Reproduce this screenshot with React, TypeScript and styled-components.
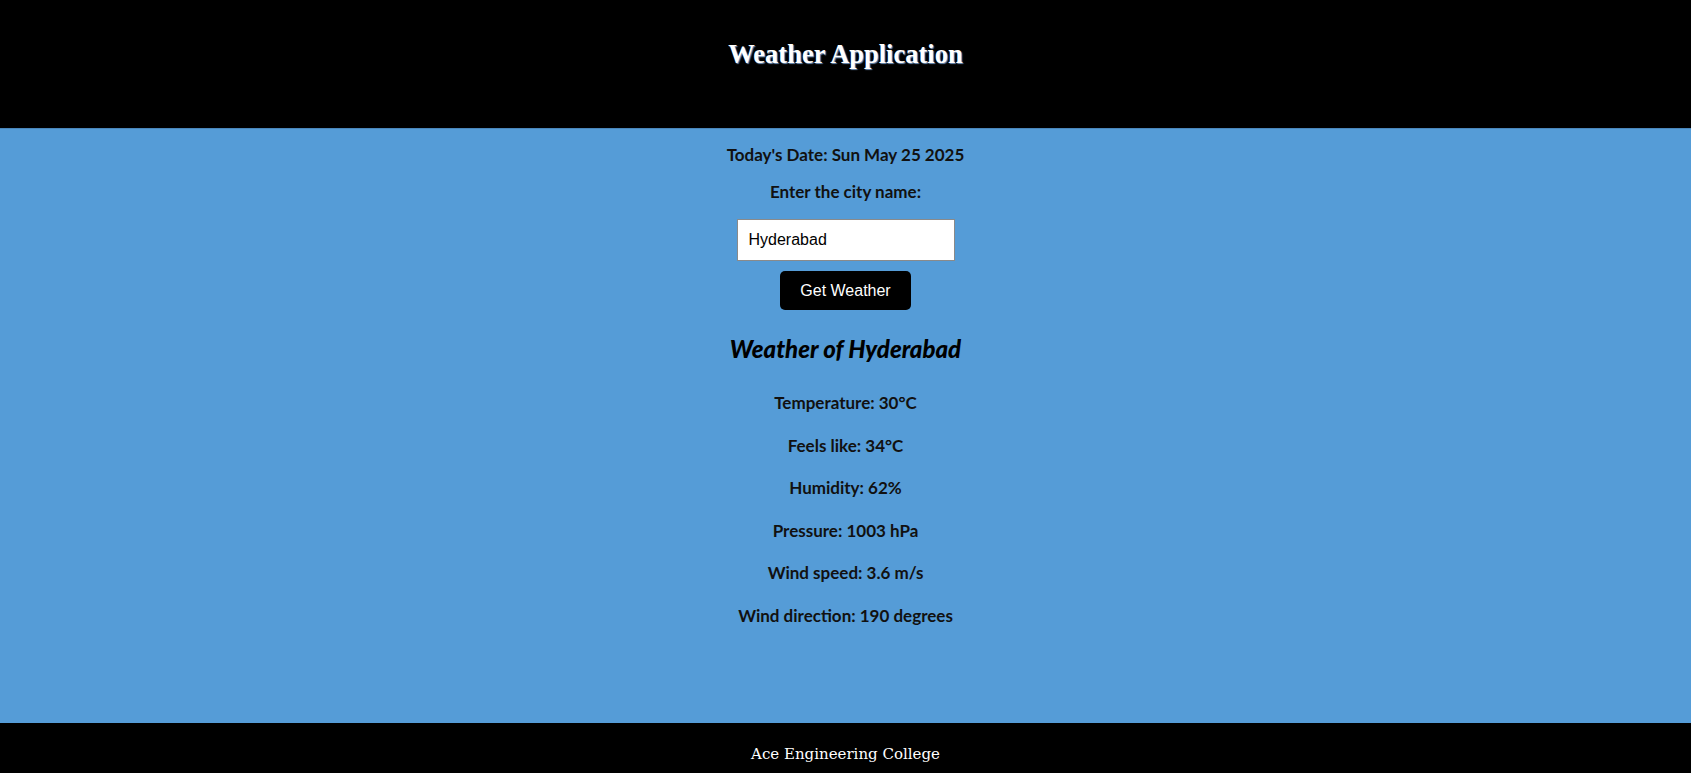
import styled, { createGlobalStyle } from "styled-components";

const weather = {
  city: "Hyderabad",
  items: [
    "Temperature: 30°C",
    "Feels like: 34°C",
    "Humidity: 62%",
    "Pressure: 1003 hPa",
    "Wind speed: 3.6 m/s",
    "Wind direction: 190 degrees",
  ],
};

const App = () => {
  return (
    <>
      <GlobalStyle />
      <Header>
        <Title>Weather Application</Title>
      </Header>
      <Main>
        <Label>Today's Date: Sun May 25 2025</Label>
        <Label>Enter the city name:</Label>
        <CityInput defaultValue={weather.city} />
        <Button>Get Weather</Button>
        <CityTitle>Weather of {weather.city}</CityTitle>
        <List>
          {weather.items.map((item) => (
            <Item key={item}>{item}</Item>
          ))}
        </List>
      </Main>
      <Footer>
        <FooterText>Ace Engineering College</FooterText>
      </Footer>
    </>
  );
};

export default App;

// STYLE
const GlobalStyle = createGlobalStyle`
  body {
    margin: 0;
    background: #000;
    font-family: "Lato", "Noto Sans", sans-serif;
  }
`;

const Header = styled.header`
  height: 128px;
  background: #000;
  display: flex;
  justify-content: center;
  align-items: flex-start;
`;

const Title = styled.h1`
  margin: 39px 0 0;
  font-family: "Liberation Serif", serif;
  font-size: 26.5px;
  font-weight: 700;
  color: #fff;
  text-shadow: 1px 1px 1px #6d8fb8;
`;

const Main = styled.main`
  background: #559cd7;
  min-height: 595px;
  box-sizing: border-box;
  border-top: 1px solid #4a86bb;
  display: flex;
  flex-direction: column;
  align-items: center;
  padding-top: 15px;
`;

const Label = styled.p`
  margin: 0 0 16px;
  font-size: 17px;
  font-weight: 700;
  color: #111;
`;

const CityInput = styled.input`
  width: 218px;
  height: 42px;
  box-sizing: border-box;
  margin-top: 1px;
  padding: 0 11px;
  border: 1px solid #8a8a8a;
  font-family: "Liberation Sans", Arial, sans-serif;
  font-size: 16px;
  color: #000;
  outline: none;
`;

const Button = styled.button`
  margin-top: 10px;
  width: 131px;
  height: 39px;
  border: none;
  border-radius: 5px;
  background: #000;
  color: #fff;
  font-family: "Liberation Sans", Arial, sans-serif;
  font-size: 16px;
`;

const CityTitle = styled.h2`
  margin: 24px 0 0;
  font-size: 24px;
  font-style: italic;
  font-weight: 900;
  color: #000;
`;

const List = styled.div`
  display: flex;
  flex-direction: column;
  align-items: center;
  gap: 22.5px;
  margin-top: 30px;
`;

const Item = styled.p`
  margin: 0;
  font-size: 17px;
  font-weight: 700;
  line-height: 20px;
  color: #111;
`;

const Footer = styled.footer`
  background: #000;
  height: 80px;
  display: flex;
  justify-content: center;
`;

const FooterText = styled.p`
  margin: 22px 0 0;
  font-family: "DejaVu Serif", serif;
  font-size: 15px;
  color: #fff;
`;
